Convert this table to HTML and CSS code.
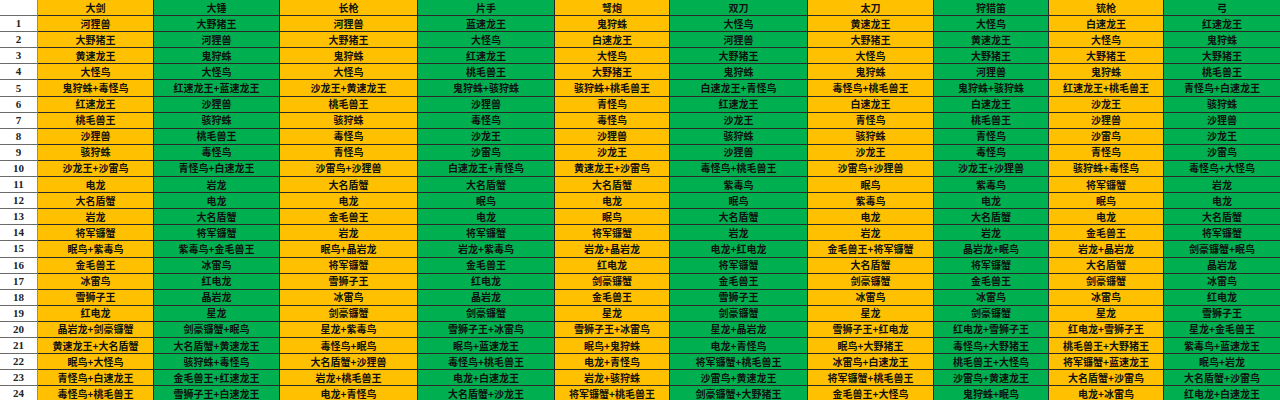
FILE: index.html
```html
<!DOCTYPE html>
<html lang="zh-CN">
<head>
<meta charset="utf-8">
<title>怪物顺序表</title>
<link rel="stylesheet" href="styles.css">
</head>
<body>
<div class="sheet">
<div class="row head"><span></span><span>大剑</span><span>大锤</span><span>长枪</span><span>片手</span><span>弩炮</span><span>双刀</span><span>太刀</span><span>狩猎笛</span><span>铳枪</span><span>弓</span></div>
<div class="row"><span>1</span><span>河狸兽</span><span>大野猪王</span><span>河狸兽</span><span>蓝速龙王</span><span>鬼狩蛛</span><span>大怪鸟</span><span>黄速龙王</span><span>大怪鸟</span><span>白速龙王</span><span>红速龙王</span></div>
<div class="row"><span>2</span><span>大野猪王</span><span>河狸兽</span><span>大野猪王</span><span>大怪鸟</span><span>白速龙王</span><span>河狸兽</span><span>大野猪王</span><span>黄速龙王</span><span>大怪鸟</span><span>鬼狩蛛</span></div>
<div class="row"><span>3</span><span>黄速龙王</span><span>鬼狩蛛</span><span>鬼狩蛛</span><span>红速龙王</span><span>大怪鸟</span><span>大野猪王</span><span>大怪鸟</span><span>大野猪王</span><span>大野猪王</span><span>大野猪王</span></div>
<div class="row"><span>4</span><span>大怪鸟</span><span>大怪鸟</span><span>大怪鸟</span><span>桃毛兽王</span><span>大野猪王</span><span>鬼狩蛛</span><span>鬼狩蛛</span><span>河狸兽</span><span>鬼狩蛛</span><span>桃毛兽王</span></div>
<div class="row"><span>5</span><span>鬼狩蛛+毒怪鸟</span><span>红速龙王+蓝速龙王</span><span>沙龙王+黄速龙王</span><span>鬼狩蛛+骇狩蛛</span><span>骇狩蛛+桃毛兽王</span><span>白速龙王+青怪鸟</span><span>毒怪鸟+桃毛兽王</span><span>鬼狩蛛+骇狩蛛</span><span>红速龙王+桃毛兽王</span><span>青怪鸟+白速龙王</span></div>
<div class="row"><span>6</span><span>红速龙王</span><span>沙狸兽</span><span>桃毛兽王</span><span>沙狸兽</span><span>青怪鸟</span><span>红速龙王</span><span>白速龙王</span><span>白速龙王</span><span>沙龙王</span><span>骇狩蛛</span></div>
<div class="row"><span>7</span><span>桃毛兽王</span><span>骇狩蛛</span><span>骇狩蛛</span><span>毒怪鸟</span><span>毒怪鸟</span><span>沙龙王</span><span>青怪鸟</span><span>桃毛兽王</span><span>沙狸兽</span><span>沙狸兽</span></div>
<div class="row"><span>8</span><span>沙狸兽</span><span>桃毛兽王</span><span>毒怪鸟</span><span>沙龙王</span><span>沙狸兽</span><span>骇狩蛛</span><span>骇狩蛛</span><span>青怪鸟</span><span>沙雷鸟</span><span>沙龙王</span></div>
<div class="row"><span>9</span><span>骇狩蛛</span><span>毒怪鸟</span><span>青怪鸟</span><span>沙雷鸟</span><span>沙龙王</span><span>沙狸兽</span><span>沙龙王</span><span>毒怪鸟</span><span>青怪鸟</span><span>沙雷鸟</span></div>
<div class="row"><span>10</span><span>沙龙王+沙雷鸟</span><span>青怪鸟+白速龙王</span><span>沙雷鸟+沙狸兽</span><span>白速龙王+青怪鸟</span><span>黄速龙王+沙雷鸟</span><span>毒怪鸟+桃毛兽王</span><span>沙雷鸟+沙狸兽</span><span>沙龙王+沙狸兽</span><span>骇狩蛛+毒怪鸟</span><span>毒怪鸟+大怪鸟</span></div>
<div class="row"><span>11</span><span>电龙</span><span>岩龙</span><span>大名盾蟹</span><span>大名盾蟹</span><span>大名盾蟹</span><span>紫毒鸟</span><span>眠鸟</span><span>紫毒鸟</span><span>将军镰蟹</span><span>岩龙</span></div>
<div class="row"><span>12</span><span>大名盾蟹</span><span>电龙</span><span>电龙</span><span>眠鸟</span><span>电龙</span><span>眠鸟</span><span>紫毒鸟</span><span>电龙</span><span>眠鸟</span><span>电龙</span></div>
<div class="row"><span>13</span><span>岩龙</span><span>大名盾蟹</span><span>金毛兽王</span><span>电龙</span><span>眠鸟</span><span>大名盾蟹</span><span>电龙</span><span>大名盾蟹</span><span>电龙</span><span>大名盾蟹</span></div>
<div class="row"><span>14</span><span>将军镰蟹</span><span>将军镰蟹</span><span>岩龙</span><span>将军镰蟹</span><span>将军镰蟹</span><span>岩龙</span><span>岩龙</span><span>岩龙</span><span>金毛兽王</span><span>将军镰蟹</span></div>
<div class="row"><span>15</span><span>眠鸟+紫毒鸟</span><span>紫毒鸟+金毛兽王</span><span>眠鸟+晶岩龙</span><span>岩龙+紫毒鸟</span><span>岩龙+晶岩龙</span><span>电龙+红电龙</span><span>金毛兽王+将军镰蟹</span><span>晶岩龙+眠鸟</span><span>岩龙+晶岩龙</span><span>剑豪镰蟹+眠鸟</span></div>
<div class="row"><span>16</span><span>金毛兽王</span><span>冰雷鸟</span><span>将军镰蟹</span><span>金毛兽王</span><span>红电龙</span><span>将军镰蟹</span><span>大名盾蟹</span><span>将军镰蟹</span><span>大名盾蟹</span><span>晶岩龙</span></div>
<div class="row"><span>17</span><span>冰雷鸟</span><span>红电龙</span><span>雪狮子王</span><span>红电龙</span><span>剑豪镰蟹</span><span>金毛兽王</span><span>剑豪镰蟹</span><span>金毛兽王</span><span>剑豪镰蟹</span><span>冰雷鸟</span></div>
<div class="row"><span>18</span><span>雪狮子王</span><span>晶岩龙</span><span>冰雷鸟</span><span>晶岩龙</span><span>金毛兽王</span><span>雪狮子王</span><span>冰雷鸟</span><span>冰雷鸟</span><span>冰雷鸟</span><span>红电龙</span></div>
<div class="row"><span>19</span><span>红电龙</span><span>星龙</span><span>剑豪镰蟹</span><span>剑豪镰蟹</span><span>星龙</span><span>剑豪镰蟹</span><span>星龙</span><span>剑豪镰蟹</span><span>星龙</span><span>雪狮子王</span></div>
<div class="row"><span>20</span><span>晶岩龙+剑豪镰蟹</span><span>剑豪镰蟹+眠鸟</span><span>星龙+紫毒鸟</span><span>雪狮子王+冰雷鸟</span><span>雪狮子王+冰雷鸟</span><span>星龙+晶岩龙</span><span>雪狮子王+红电龙</span><span>红电龙+雪狮子王</span><span>红电龙+雪狮子王</span><span>星龙+金毛兽王</span></div>
<div class="row"><span>21</span><span>黄速龙王+大名盾蟹</span><span>大名盾蟹+黄速龙王</span><span>毒怪鸟+眠鸟</span><span>眠鸟+蓝速龙王</span><span>眠鸟+鬼狩蛛</span><span>电龙+青怪鸟</span><span>眠鸟+大野猪王</span><span>毒怪鸟+大野猪王</span><span>桃毛兽王+大野猪王</span><span>紫毒鸟+蓝速龙王</span></div>
<div class="row"><span>22</span><span>眠鸟+大怪鸟</span><span>骇狩蛛+毒怪鸟</span><span>大名盾蟹+沙狸兽</span><span>毒怪鸟+桃毛兽王</span><span>电龙+青怪鸟</span><span>将军镰蟹+桃毛兽王</span><span>冰雷鸟+白速龙王</span><span>桃毛兽王+大怪鸟</span><span>将军镰蟹+蓝速龙王</span><span>眠鸟+岩龙</span></div>
<div class="row"><span>23</span><span>青怪鸟+白速龙王</span><span>金毛兽王+红速龙王</span><span>岩龙+桃毛兽王</span><span>电龙+白速龙王</span><span>岩龙+骇狩蛛</span><span>沙雷鸟+黄速龙王</span><span>将军镰蟹+桃毛兽王</span><span>沙雷鸟+黄速龙王</span><span>大名盾蟹+沙雷鸟</span><span>大名盾蟹+沙雷鸟</span></div>
<div class="row"><span>24</span><span>毒怪鸟+桃毛兽王</span><span>雪狮子王+白速龙王</span><span>电龙+青怪鸟</span><span>大名盾蟹+沙龙王</span><span>将军镰蟹+桃毛兽王</span><span>剑豪镰蟹+大野猪王</span><span>金毛兽王+大怪鸟</span><span>鬼狩蛛+眠鸟</span><span>电龙+冰雷鸟</span><span>红电龙+白速龙王</span></div>
</div>
</body>
</html>
```

FILE: styles.css
```css
html, body {
  margin: 0;
  padding: 0;
  background: #ffffff;
  overflow: hidden;
}

.sheet {
  width: 1280px;
  display: flex;
  flex-direction: column;
  font-family: "Noto Sans CJK SC", "Noto Sans", sans-serif;
  font-weight: 700;
  font-size: 10px;
  color: #111;
}

.row {
  display: grid;
  grid-template-columns: 38px 116px 126px 138px 137px 115px 138px 126px 115px 115px 116px;
  height: 16.1px;
  flex: none;
}

.row span {
  box-sizing: border-box;
  display: flex;
  align-items: center;
  justify-content: center;
  border-bottom: 1px solid #2a2a2a;
  border-right: 1px solid #2a2a2a;
  white-space: nowrap;
  overflow: hidden;
  line-height: 1;
}

.row span:nth-child(even) {
  background: #ffc000;
}

.row span:nth-child(odd) {
  background: #00b050;
}

.row span:first-child {
  background: #ffffff;
  border-right: 1px solid #8a8a8a;
  border-bottom: 1px solid #6a6a6a;
  font-family: "Liberation Serif", "DejaVu Serif", serif;
  font-size: 11px;
  color: #222;
}

.row span:last-child {
  border-right: none;
}
```
